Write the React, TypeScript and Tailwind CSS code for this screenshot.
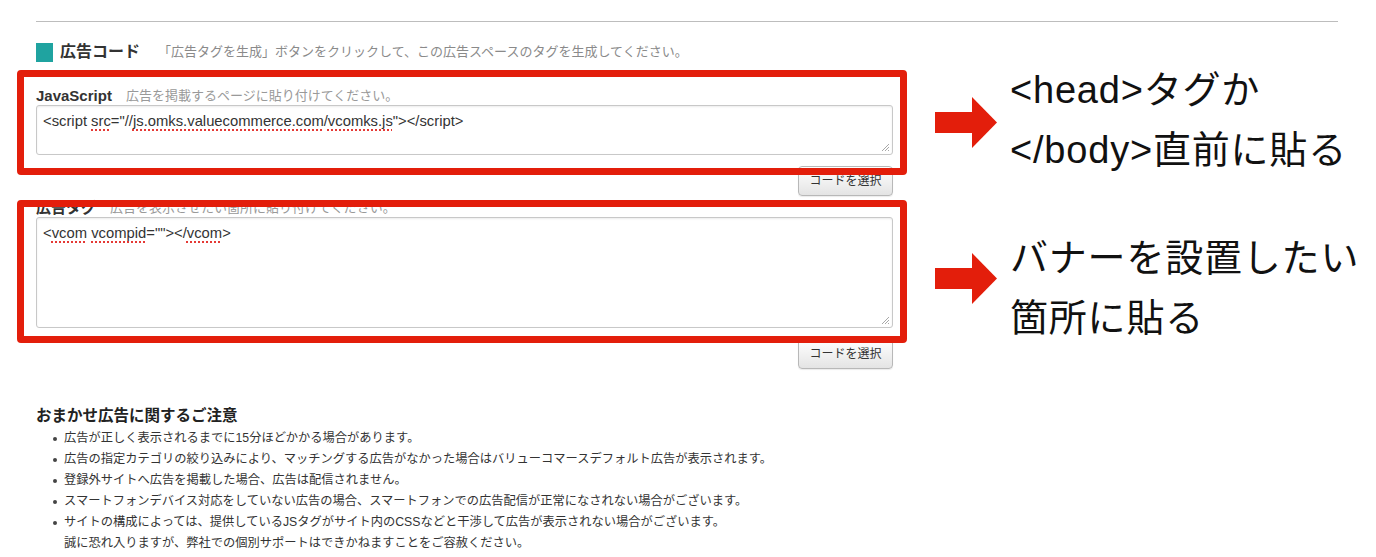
import React from "react";

const FONT = { fontFamily: '"Liberation Sans", "Noto Sans CJK JP", sans-serif' };

function Squiggle({ children }: { children: React.ReactNode }) {
  return (
    <span className="underline decoration-dotted decoration-[#e53935] decoration-[2px] underline-offset-[3px]">
      {children}
    </span>
  );
}

function ResizeHandle() {
  return (
    <svg className="absolute right-[2px] bottom-[2px]" width="10" height="10" viewBox="0 0 10 10">
      <line x1="9" y1="2" x2="2" y2="9" stroke="#a8a8a8" strokeWidth="1" />
      <line x1="9" y1="5" x2="5" y2="9" stroke="#a8a8a8" strokeWidth="1" />
      <line x1="9" y1="8" x2="8" y2="9" stroke="#a8a8a8" strokeWidth="1" />
    </svg>
  );
}

function CodeBox({ h, children }: { h: string; children: React.ReactNode }) {
  return (
    <div
      className={`relative ${h} w-full rounded-[3px] border border-[#c8c8c8] bg-white px-[6px] pt-[6px] text-[14.8px] leading-[18px] text-[#333] shadow-[inset_0_1px_2px_rgba(0,0,0,0.08)]`}
    >
      <div>{children}</div>
      <ResizeHandle />
    </div>
  );
}

function SelectButton() {
  return (
    <div className="flex justify-end mt-[11px]">
      <div className="flex h-[30px] w-[95px] items-center justify-center rounded-[4px] border border-[#b8b8b8] bg-linear-to-b from-white to-[#e4e4e4] text-[12px] text-[#333] shadow-[0_1px_1px_rgba(0,0,0,0.08)]">
        コードを選択
      </div>
    </div>
  );
}

function Arrow({ top }: { top: number }) {
  return (
    <svg
      className="absolute left-[935px]"
      style={{ top }}
      width="63"
      height="51"
      viewBox="0 0 63 51"
    >
      <rect x="0" y="15" width="38" height="21" fill="#e31e0b" />
      <polygon points="37,0 62,25.5 37,51" fill="#e31e0b" />
    </svg>
  );
}

const notes = [
  "広告が正しく表示されるまでに15分ほどかかる場合があります。",
  "広告の指定カテゴリの絞り込みにより、マッチングする広告がなかった場合はバリューコマースデフォルト広告が表示されます。",
  "登録外サイトへ広告を掲載した場合、広告は配信されません。",
  "スマートフォンデバイス対応をしていない広告の場合、スマートフォンでの広告配信が正常になされない場合がございます。",
];

export default function App() {
  return (
    <div className="relative h-[557px] w-[1376px] overflow-hidden bg-white" style={FONT}>
      <div className="pl-[36px] pr-[38px] pt-[21px]">
        <div className="border-t border-[#bdbdbd]" />
      </div>

      <div className="w-[893px] pl-[36px]">
        {/* section heading */}
        <div className="mt-[20px] flex h-[20px] items-center">
          <div className="h-[19px] w-[17px] bg-[#1fa3a0]" />
          <div className="ml-[7px] text-[16px] font-bold text-[#333]">広告コード</div>
          <div className="ml-[18px] text-[13px] text-[#8a8a8a]">
            「広告タグを生成」ボタンをクリックして、この広告スペースのタグを生成してください。
          </div>
        </div>

        {/* JavaScript */}
        <div className="mt-[25px] flex h-[18px] items-center">
          <span className="text-[15px] font-bold text-[#333]">JavaScript</span>
          <span className="ml-[14px] text-[13px] text-[#999]">広告を掲載するページに貼り付けてください。</span>
        </div>
        <CodeBox h="h-[50px]">
          {'<script '}
          <Squiggle>src</Squiggle>
          {'="//'}
          <Squiggle>js.omks.valuecommerce.com</Squiggle>
          {'/'}
          <Squiggle>vcomks.js</Squiggle>
          {'"></script>'}
        </CodeBox>
        <SelectButton />

        {/* 広告タグ */}
        <div className="mt-[3px] flex h-[18px] items-center">
          <span className="text-[15px] font-bold text-[#333]">広告タグ</span>
          <span className="ml-[14px] text-[13px] text-[#999]">広告を表示させたい箇所に貼り付けてください。</span>
        </div>
        <CodeBox h="h-[111px]">
          {'<'}
          <Squiggle>vcom</Squiggle> <Squiggle>vcompid</Squiggle>
          {'=""></'}
          <Squiggle>vcom</Squiggle>
          {'>'}
        </CodeBox>
        <SelectButton />

        {/* notes */}
        <div className="mt-[37px] h-[20px] text-[15.5px] font-bold leading-[20px] text-[#222]">
          おまかせ広告に関するご注意
        </div>
        <ul className="mt-[2px] text-[12.25px] leading-[21px] text-[#333]">
          {notes.map((n) => (
            <li key={n} className="flex items-center whitespace-nowrap">
              <span className="ml-[17px] mr-[7px] h-[4px] w-[4px] rounded-full bg-[#444]" />
              <span>{n}</span>
            </li>
          ))}
          <li className="flex items-center whitespace-nowrap">
            <span className="ml-[17px] mr-[7px] h-[4px] w-[4px] rounded-full bg-[#444]" />
            <span>サイトの構成によっては、提供しているJSタグがサイト内のCSSなどと干渉して広告が表示されない場合がございます。</span>
          </li>
          <li className="whitespace-nowrap pl-[28px]">
            誠に恐れ入りますが、弊社での個別サポートはできかねますことをご容赦ください。
          </li>
        </ul>
      </div>

      {/* annotation overlays */}
      <div className="pointer-events-none absolute left-[17px] top-[70px] h-[105px] w-[890px] rounded-[4px] border-[7px] border-[#e31e0b]" />
      <div className="pointer-events-none absolute left-[17px] top-[200px] h-[143px] w-[890px] rounded-[4px] border-[7px] border-[#e31e0b]" />

      <Arrow top={97} />
      <Arrow top={253} />

      <div className="absolute left-[1010px] top-[60px] whitespace-nowrap text-[38px] leading-[60px] tracking-[0.8px] text-[#111]">
        <div>{'<head>タグか'}</div>
        <div>{'</body>直前に貼る'}</div>
      </div>
      <div className="absolute left-[1010px] top-[228px] whitespace-nowrap text-[38px] leading-[60px] tracking-[0.8px] text-[#111]">
        <div>バナーを設置したい</div>
        <div>箇所に貼る</div>
      </div>
    </div>
  );
}
